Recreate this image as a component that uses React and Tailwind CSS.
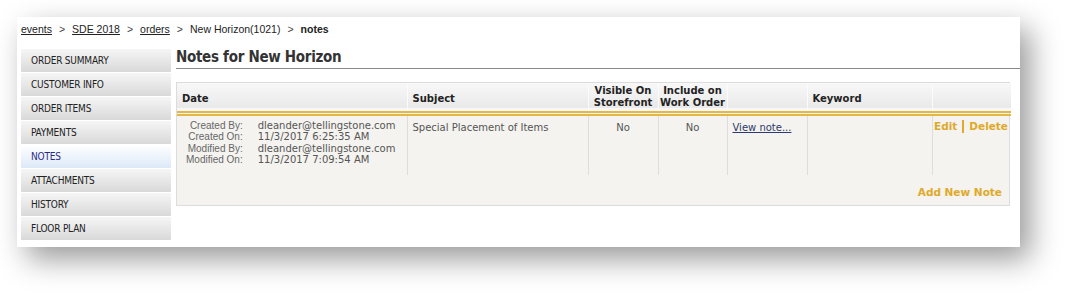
import React from "react";

const navItems = [
  "ORDER SUMMARY",
  "CUSTOMER INFO",
  "ORDER ITEMS",
  "PAYMENTS",
  "NOTES",
  "ATTACHMENTS",
  "HISTORY",
  "FLOOR PLAN",
];

const verdana = { fontFamily: '"DejaVu Sans", Verdana, sans-serif' };
const tahoma = { fontFamily: '"DejaVu Sans Condensed", "Liberation Sans", sans-serif' };
const arial = { fontFamily: '"Liberation Sans", Arial, sans-serif' };

export default function App() {
  return (
    <div className="w-[1068px] h-[295px] bg-white pt-[17px] pl-[17px]" style={arial}>
      <div className="w-[1003px] h-[230px] bg-white shadow-[10px_12px_28px_rgba(0,0,0,0.4)] flex flex-col">
        {/* breadcrumb */}
        <div className="h-[32px] pl-[4px] pt-[5px] text-[10.5px] text-[#222] flex items-start gap-[7px]">
          <span className="underline">events</span>
          <span className="text-[#444]">&gt;</span>
          <span className="underline">SDE 2018</span>
          <span className="text-[#444]">&gt;</span>
          <span className="underline">orders</span>
          <span className="text-[#444]">&gt;</span>
          <span>New Horizon(1021)</span>
          <span className="text-[#444]">&gt;</span>
          <span className="font-bold">notes</span>
        </div>
        <div className="flex flex-1">
          {/* sidebar */}
          <div className="w-[150px] ml-[4px] flex flex-col gap-[1px]" style={tahoma}>
            {navItems.map((item) => {
              const active = item === "NOTES";
              return (
                <div
                  key={item}
                  className={
                    active
                      ? "h-[23px] pl-[10px] flex items-center text-[10px] tracking-[-0.2px] text-[#2a2a8a] bg-gradient-to-b from-[#ffffff] to-[#dce9f8]"
                      : "h-[23px] pl-[10px] flex items-center text-[10px] tracking-[-0.2px] text-[#222] bg-gradient-to-b from-[#f6f6f6] to-[#d9d9d9]"
                  }
                >
                  {item}
                </div>
              );
            })}
          </div>
          {/* content */}
          <div className="flex-1 ml-[5px] flex flex-col">
            <div className="h-[20px] border-b border-[#8a8a8a] flex items-start">
              <h1 className="text-[15px] font-bold text-[#333] leading-[15px] mt-[1px] tracking-[-0.3px]" style={tahoma}>
                Notes for New Horizon
              </h1>
            </div>
            <div className="mt-[13px] w-[834px] border border-[#dcdcdc] bg-[#f4f3ef]" style={verdana}>
              <table className="w-full border-collapse text-[10px] table-fixed">
                <colgroup>
                  <col className="w-[230px]" />
                  <col className="w-[181px]" />
                  <col className="w-[70px]" />
                  <col className="w-[69px]" />
                  <col className="w-[80px]" />
                  <col className="w-[125px]" />
                  <col className="w-[79px]" />
                </colgroup>
                <thead>
                  <tr className="h-[30px] bg-gradient-to-b from-[#f8f8f8] to-[#e9e9e9] text-[#222] border-b-[5px] border-double border-[#e4b845]">
                    <th className="text-left font-bold pl-[5px] pt-[3px] border-r border-[#fbfbfb]">Date</th>
                    <th className="text-left font-bold pl-[5px] pt-[3px] border-r border-[#fbfbfb]">Subject</th>
                    <th className="text-center font-bold leading-[12px] border-r border-[#fbfbfb]">Visible On<br />Storefront</th>
                    <th className="text-center font-bold leading-[12px] border-r border-[#fbfbfb]">Include on<br />Work Order</th>
                    <th className="border-r border-[#fbfbfb]"></th>
                    <th className="text-left font-bold pl-[5px] pt-[3px] border-r border-[#fbfbfb]">Keyword</th>
                    <th></th>
                  </tr>
                </thead>
                <tbody className="text-[#555]">
                  <tr className="h-[62px] align-top">
                    <td className="pt-[4px] pl-[9px] border-r border-[#dddddd]">
                      <div className="grid grid-cols-[auto_auto] justify-start gap-x-[15px] leading-[11.5px]">
                        <span className="text-right text-[#666] text-[10px]" style={arial}>Created By:</span>
                        <span>dleander@tellingstone.com</span>
                        <span className="text-right text-[#666] text-[10px]" style={arial}>Created On:</span>
                        <span>11/3/2017 6:25:35 AM</span>
                        <span className="text-right text-[#666] text-[10px]" style={arial}>Modified By:</span>
                        <span>dleander@tellingstone.com</span>
                        <span className="text-right text-[#666] text-[10px]" style={arial}>Modified On:</span>
                        <span>11/3/2017 7:09:54 AM</span>
                      </div>
                    </td>
                    <td className="pt-[4px] pl-[5px] border-r border-[#dddddd]">Special Placement of Items</td>
                    <td className="pt-[4px] text-center border-r border-[#dddddd]">No</td>
                    <td className="pt-[4px] text-center border-r border-[#dddddd]">No</td>
                    <td className="pt-[4px] pl-[5px] border-r border-[#dddddd]">
                      <span className="underline text-[#2f3a6e]">View note...</span>
                    </td>
                    <td className="border-r border-[#dddddd]"></td>
                    <td className="pt-[3px] pr-[3px] text-right">
                      <span className="font-bold text-[#dfa92c] text-[10.5px] inline-flex items-center gap-[5px]">
                        <span>Edit</span>
                        <span className="inline-block w-[2px] h-[13px] bg-[#dfa92c]"></span>
                        <span>Delete</span>
                      </span>
                    </td>
                  </tr>
                  <tr className="h-[30px]">
                    <td colSpan={7} className="text-right pr-[9px] pt-[6px]">
                      <span className="font-bold text-[#dfa92c] text-[10.5px]">Add New Note</span>
                    </td>
                  </tr>
                </tbody>
              </table>
            </div>
          </div>
        </div>
      </div>
    </div>
  );
}
